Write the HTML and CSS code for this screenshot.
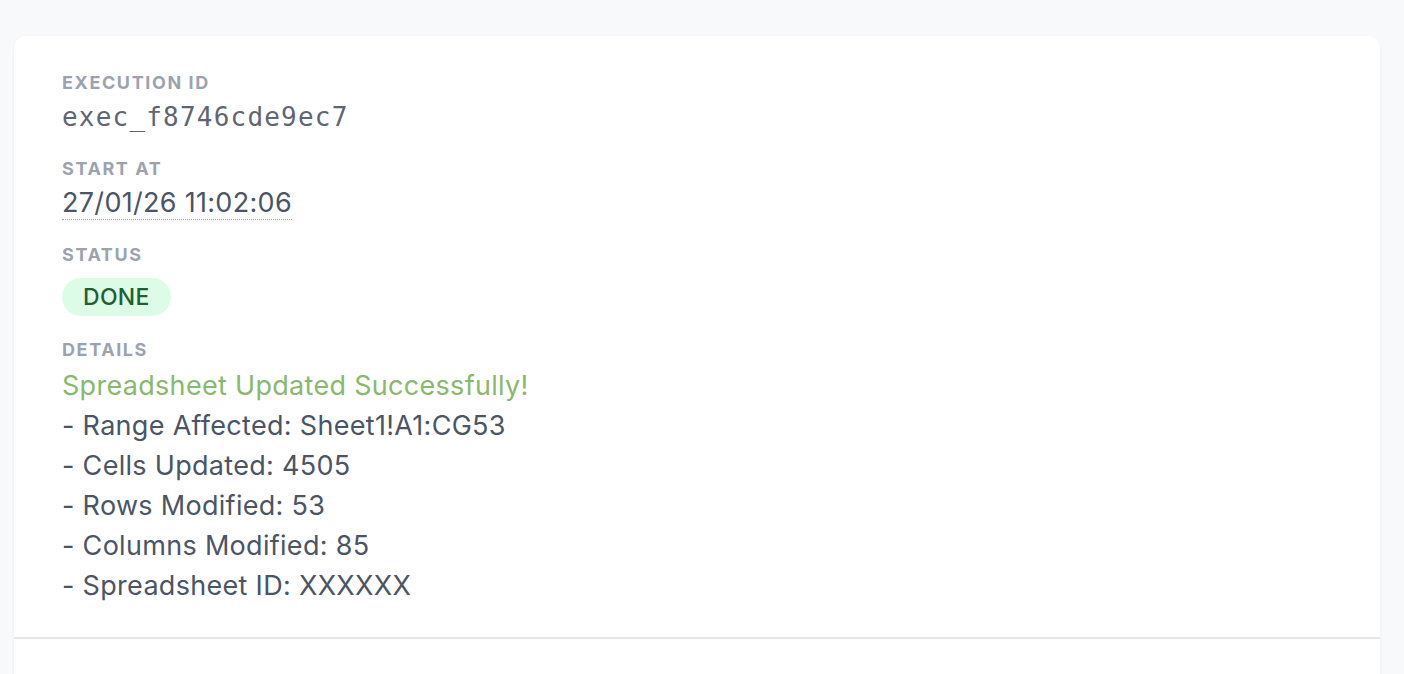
FILE: index.html
```html
<!DOCTYPE html>
<html>
<head>
<meta charset="utf-8">
<link rel="stylesheet" href="styles.css">
</head>
<body>
<div class="card">
  <div class="card-body">
    <div class="field">
      <div class="label">Execution ID</div>
      <div class="value mono">exec_f8746cde9ec7</div>
    </div>
    <div class="field">
      <div class="label">Start At</div>
      <div class="value"><span class="dotted">27/01/26 11:02:06</span></div>
    </div>
    <div class="field">
      <div class="label">Status</div>
      <div class="badge-row"><span class="badge">DONE</span></div>
    </div>
    <div class="field">
      <div class="label">Details</div>
      <div class="details">
        <div class="success">Spreadsheet Updated Successfully!</div>
        <div>- Range Affected: Sheet1!A1:CG53</div>
        <div>- Cells Updated: 4505</div>
        <div>- Rows Modified: 53</div>
        <div>- Columns Modified: 85</div>
        <div>- Spreadsheet ID: XXXXXX</div>
      </div>
    </div>
  </div>
  <div class="card-footer"></div>
</div>
</body>
</html>
```
FILE: styles.css
```css
html, body {
  margin: 0;
  padding: 0;
  background: #f8f9fb;
  font-family: Inter, "Noto Sans", "Liberation Sans", sans-serif;
  overflow: hidden;
}
body {
  padding: 36px 24px 0 14px;
}
.card {
  background: #ffffff;
  border-radius: 12px;
  box-shadow: 0 1px 3px rgba(0, 0, 0, 0.06);
}
.card-body {
  padding: 35px 48px 31px 48px;
  display: flex;
  flex-direction: column;
  gap: 22px;
}
.field {
  display: flex;
  flex-direction: column;
  align-items: flex-start;
}
.label {
  font-size: 18px;
  line-height: 24px;
  font-weight: 700;
  letter-spacing: 1.6px;
  text-transform: uppercase;
  color: #9ca3af;
  margin-bottom: 4px;
}
.value {
  font-size: 27px;
  line-height: 36px;
  letter-spacing: 0.3px;
  color: #4b5563;
}
.mono {
  font-family: "DejaVu Sans Mono", "Liberation Mono", monospace;
  font-size: 26px;
  letter-spacing: 1.2px;
  color: #5f6672;
}
.dotted {
  border-bottom: 1px dotted #9ca3af;
}
.badge-row {
  margin-top: 7px;
}
.badge {
  display: inline-block;
  background: #dcfce7;
  color: #1f5f30;
  font-size: 23px;
  font-weight: 500;
  line-height: 38px;
  height: 38px;
  padding: 0 21px;
  letter-spacing: 0.3px;
  border-radius: 19px;
}
.details {
  font-size: 27px;
  line-height: 40px;
  letter-spacing: 0.3px;
  color: #4b5563;
}
.success {
  color: #88b96c;
}
.card-footer {
  border-top: 2px solid #e5e7eb;
  height: 200px;
}
```
